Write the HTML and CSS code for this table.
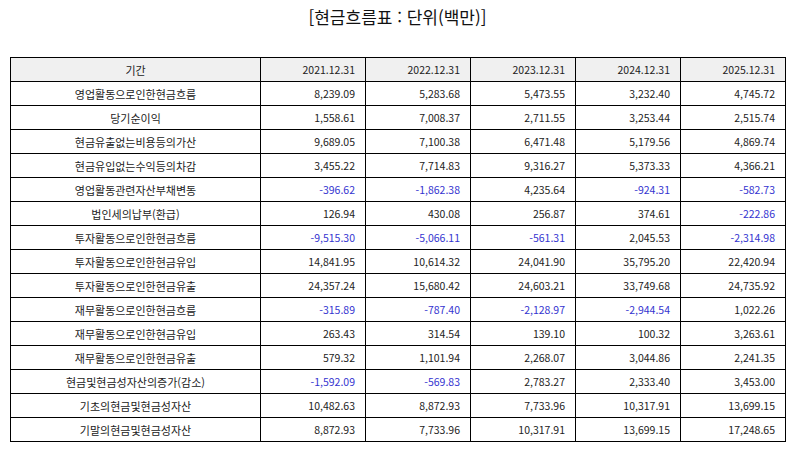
FILE: index.html
```html
<!DOCTYPE html>
<html lang="ko">
<head>
<meta charset="utf-8">
<title>현금흐름표</title>
<link rel="stylesheet" href="styles.css">
</head>
<body>
<div class="page">
  <h1 class="title">[현금흐름표 : 단위(백만)]</h1>
  <table class="cf">
    <colgroup>
      <col class="c-label"><col class="c-num"><col class="c-num"><col class="c-num"><col class="c-num"><col class="c-num">
    </colgroup>
    <thead>
      <tr><th class="lbl">기간</th><th>2021.12.31</th><th>2022.12.31</th><th>2023.12.31</th><th>2024.12.31</th><th>2025.12.31</th></tr>
    </thead>
    <tbody>
      <tr><td class="lbl">영업활동으로인한현금흐름</td><td>8,239.09</td><td>5,283.68</td><td>5,473.55</td><td>3,232.40</td><td>4,745.72</td></tr>
      <tr><td class="lbl">당기순이익</td><td>1,558.61</td><td>7,008.37</td><td>2,711.55</td><td>3,253.44</td><td>2,515.74</td></tr>
      <tr><td class="lbl">현금유출없는비용등의가산</td><td>9,689.05</td><td>7,100.38</td><td>6,471.48</td><td>5,179.56</td><td>4,869.74</td></tr>
      <tr><td class="lbl">현금유입없는수익등의차감</td><td>3,455.22</td><td>7,714.83</td><td>9,316.27</td><td>5,373.33</td><td>4,366.21</td></tr>
      <tr><td class="lbl">영업활동관련자산부채변동</td><td class="neg">-396.62</td><td class="neg">-1,862.38</td><td>4,235.64</td><td class="neg">-924.31</td><td class="neg">-582.73</td></tr>
      <tr><td class="lbl">법인세의납부(환급)</td><td>126.94</td><td>430.08</td><td>256.87</td><td>374.61</td><td class="neg">-222.86</td></tr>
      <tr><td class="lbl">투자활동으로인한현금흐름</td><td class="neg">-9,515.30</td><td class="neg">-5,066.11</td><td class="neg">-561.31</td><td>2,045.53</td><td class="neg">-2,314.98</td></tr>
      <tr><td class="lbl">투자활동으로인한현금유입</td><td>14,841.95</td><td>10,614.32</td><td>24,041.90</td><td>35,795.20</td><td>22,420.94</td></tr>
      <tr><td class="lbl">투자활동으로인한현금유출</td><td>24,357.24</td><td>15,680.42</td><td>24,603.21</td><td>33,749.68</td><td>24,735.92</td></tr>
      <tr><td class="lbl">재무활동으로인한현금흐름</td><td class="neg">-315.89</td><td class="neg">-787.40</td><td class="neg">-2,128.97</td><td class="neg">-2,944.54</td><td>1,022.26</td></tr>
      <tr><td class="lbl">재무활동으로인한현금유입</td><td>263.43</td><td>314.54</td><td>139.10</td><td>100.32</td><td>3,263.61</td></tr>
      <tr><td class="lbl">재무활동으로인한현금유출</td><td>579.32</td><td>1,101.94</td><td>2,268.07</td><td>3,044.86</td><td>2,241.35</td></tr>
      <tr><td class="lbl">현금및현금성자산의증가(감소)</td><td class="neg">-1,592.09</td><td class="neg">-569.83</td><td>2,783.27</td><td>2,333.40</td><td>3,453.00</td></tr>
      <tr><td class="lbl">기초의현금및현금성자산</td><td>10,482.63</td><td>8,872.93</td><td>7,733.96</td><td>10,317.91</td><td>13,699.15</td></tr>
      <tr><td class="lbl">기말의현금및현금성자산</td><td>8,872.93</td><td>7,733.96</td><td>10,317.91</td><td>13,699.15</td><td>17,248.65</td></tr>
    </tbody>
  </table>
</div>
</body>
</html>
```

FILE: styles.css
```css
html, body {
  margin: 0;
  padding: 0;
  background: #ffffff;
}
body {
  font-family: "Noto Sans CJK KR", "Noto Sans", sans-serif;
  color: #222222;
}
.page {
  padding: 5px 9px 0 10px;
}
.title {
  margin: 0;
  height: 52px;
  font-size: 17px;
  font-weight: 400;
  line-height: 24px;
  text-align: center;
  color: #111111;
}
.cf {
  width: 775px;
  border-collapse: collapse;
  table-layout: fixed;
  font-size: 10.5px;
}
.c-label { width: 250px; }
.c-num { width: 105px; }
.cf th,
.cf td {
  height: 24px;
  padding: 0 10px 0 6px;
  border: 1px solid #000000;
  text-align: right;
  font-weight: 400;
  white-space: nowrap;
  line-height: 14px;
  box-sizing: border-box;
}
.cf thead th {
  background: #f0f0f0;
}
.cf .lbl {
  text-align: center;
  padding: 0 6px;
  font-size: 11px;
}
.cf .neg {
  color: #3434d0;
}
```
